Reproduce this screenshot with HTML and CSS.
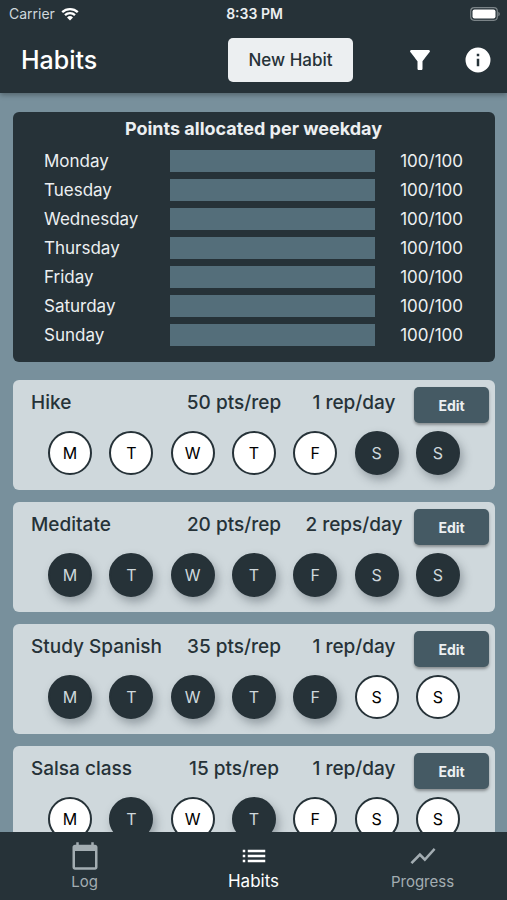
FILE: index.html
```html
<!DOCTYPE html>
<html lang="en">
<head>
<meta charset="utf-8">
<meta name="viewport" content="width=device-width, initial-scale=1">
<title>Habits</title>
<link rel="stylesheet" href="styles.css">
</head>
<body>
<header class="top">
  <div class="status">
    <span class="carrier">Carrier
      <svg class="wifi" viewBox="0 0 18 14" aria-hidden="true"><path d="M1.2 5.2a11.2 11.2 0 0 1 15.6 0M4 8.2a7.2 7.2 0 0 1 10 0" fill="none" stroke="currentColor" stroke-width="2.3"/><path d="M9 13.4 6 10.5a4.3 4.3 0 0 1 6 0z" fill="currentColor"/></svg>
    </span>
    <span class="time">8:33 PM</span>
    <svg class="battery" viewBox="0 0 30 14" aria-hidden="true"><rect x=".7" y=".7" width="26.6" height="12.6" rx="3.5" fill="none" stroke="#7b8488" stroke-width="1.2"/><rect x="2.5" y="2.5" width="23" height="9" rx="2" fill="#fff"/><path d="M28.3 4.7c2 .8 2 3.8 0 4.6z" fill="#7b8488"/></svg>
  </div>
  <div class="bar">
    <h1>Habits</h1>
    <button class="new" type="button">New Habit</button>
    <div class="actions">
      <button class="icon" type="button" aria-label="Filter"><svg viewBox="0 0 24 24"><path d="M4.25 5.61C6.27 8.2 10 13 10 13v6c0 .55.45 1 1 1h2c.55 0 1-.45 1-1v-6s3.72-4.8 5.74-7.39A.998.998 0 0 0 18.95 4H5.04a.998.998 0 0 0-.79 1.61z"/></svg></button>
      <button class="icon" type="button" aria-label="Info"><svg viewBox="0 0 24 24"><path d="M12 2a10 10 0 1 0 0 20 10 10 0 0 0 0-20zm1 15h-2v-6h2v6zm0-8h-2V7h2v2z"/></svg></button>
    </div>
  </div>
</header>
<main>
  <section class="points">
    <h2>Points allocated per weekday</h2>
    <ul>
      <li><span>Monday</span><div class="track"></div><span class="score">100/100</span></li>
      <li><span>Tuesday</span><div class="track"></div><span class="score">100/100</span></li>
      <li><span>Wednesday</span><div class="track"></div><span class="score">100/100</span></li>
      <li><span>Thursday</span><div class="track"></div><span class="score">100/100</span></li>
      <li><span>Friday</span><div class="track"></div><span class="score">100/100</span></li>
      <li><span>Saturday</span><div class="track"></div><span class="score">100/100</span></li>
      <li><span>Sunday</span><div class="track"></div><span class="score">100/100</span></li>
    </ul>
  </section>
  <article class="habit">
    <div class="info"><h3>Hike</h3><span>50 pts/rep</span><span>1 rep/day</span><button class="edit" type="button">Edit</button></div>
    <div class="days"><button type="button">M</button><button type="button">T</button><button type="button">W</button><button type="button">T</button><button type="button">F</button><button type="button" class="on">S</button><button type="button" class="on">S</button></div>
  </article>
  <article class="habit">
    <div class="info"><h3>Meditate</h3><span>20 pts/rep</span><span>2 reps/day</span><button class="edit" type="button">Edit</button></div>
    <div class="days"><button type="button" class="on">M</button><button type="button" class="on">T</button><button type="button" class="on">W</button><button type="button" class="on">T</button><button type="button" class="on">F</button><button type="button" class="on">S</button><button type="button" class="on">S</button></div>
  </article>
  <article class="habit">
    <div class="info"><h3>Study Spanish</h3><span>35 pts/rep</span><span>1 rep/day</span><button class="edit" type="button">Edit</button></div>
    <div class="days"><button type="button" class="on">M</button><button type="button" class="on">T</button><button type="button" class="on">W</button><button type="button" class="on">T</button><button type="button" class="on">F</button><button type="button">S</button><button type="button">S</button></div>
  </article>
  <article class="habit">
    <div class="info"><h3>Salsa class</h3><span>15 pts/rep</span><span>1 rep/day</span><button class="edit" type="button">Edit</button></div>
    <div class="days"><button type="button">M</button><button type="button" class="on">T</button><button type="button">W</button><button type="button" class="on">T</button><button type="button">F</button><button type="button">S</button><button type="button">S</button></div>
  </article>
</main>
<nav>
  <a href="#log"><svg viewBox="0 0 24 24"><path d="M20 3h-1V1h-2v2H7V1H5v2H4c-1.100 0-2 .9-2 2v16c0 1.100.9 2 2 2h16c1.100 0 2-.9 2-2V5c0-1.100-.9-2-2-2zm0 18H4V8h16v13z"/></svg>Log</a>
  <a href="#habits" class="current" aria-current="page"><svg viewBox="0 0 24 24"><path d="M3 13h2v-2H3v2zm0 4h2v-2H3v2zm0-8h2V7H3v2zm4 4h14v-2H7v2zm0 4h14v-2H7v2zM7 7v2h14V7H7z"/></svg>Habits</a>
  <a href="#progress"><svg viewBox="0 0 24 24"><path d="M3.500 18.490l6-6.010 4 4L22 6.920l-1.410-1.410-7.090 7.970-4-4L2 16.990z"/></svg>Progress</a>
</nav>
</body>
</html>
```
FILE: styles.css
```css
* { box-sizing: border-box; }
body {
  margin: 0;
  height: 100vh;
  display: flex;
  flex-direction: column;
  background: #78909c;
  color: #eceff1;
  font-family: Inter, "Liberation Sans", sans-serif;
}
h1, h2, h3, ul { margin: 0; padding: 0; font-weight: 500; list-style: none; }
ul { font-weight: 400; }
button { font: inherit; border: 0; padding: 0; cursor: pointer; }
svg { display: block; fill: currentColor; }

.top {
  flex: none;
  position: relative;
  background: #263238;
  box-shadow: 0 2px 5px rgba(0, 0, 0, .3);
}
.status {
  display: grid;
  grid-template-columns: 1fr auto 1fr;
  align-items: center;
  height: 27px;
  padding: 0 7px 0 9px;
  font-size: 14px;
}
.carrier { display: flex; align-items: center; gap: 6px; color: #cfd8dc; }
.wifi { width: 18px; height: 14px; color: #fff; }
.time { font-weight: 600; }
.battery { width: 30px; height: 14px; justify-self: end; }
.bar {
  display: grid;
  grid-template-columns: 1fr 125px 140px;
  align-items: center;
  height: 66px;
  padding: 0 14px 0 21px;
}
h1 { font-size: 25px; color: #fff; }
.new {
  height: 44px;
  border-radius: 5px;
  background: #eceff1;
  color: #263238;
  font-size: 17px;
  font-weight: 500;
}
.actions { display: flex; justify-content: flex-end; gap: 28px; }
.icon { width: 30px; height: 30px; background: none; color: #fff; }

main { flex: 1; min-height: 0; overflow: hidden; padding: 19px 12px 0 13px; }
.points {
  margin-bottom: 18px;
  padding: 4px 32px 13px 31px;
  border-radius: 6px;
  background: #263238;
}
h2 { font-size: 18px; font-weight: 700; line-height: 26px; text-align: center; margin-bottom: 4px; }
.points li {
  display: grid;
  grid-template-columns: 126px 1fr 88px;
  align-items: center;
  height: 29px;
  font-size: 17px;
}
.track { height: 22px; background: #546e7a; }
.score { text-align: right; }

.habit {
  height: 110px;
  margin-bottom: 12px;
  border-radius: 6px;
  background: #cfd8dc;
  color: #263238;
}
.info {
  display: grid;
  grid-template-columns: minmax(0, 1fr) 120px 120px 81px;
  align-items: center;
  height: 44px;
  padding-left: 18px;
  font-size: 19px;
  font-weight: 500;
  text-align: center;
  white-space: nowrap;
}
h3 { font-size: 19px; text-align: left; }
.edit {
  width: 75px;
  height: 36px;
  margin-top: 6px;
  border-radius: 5px;
  background: #455a64;
  color: #eceff1;
  font-size: 14px;
  font-weight: 700;
  box-shadow: 0 2px 3px rgba(0, 0, 0, .35);
}
.days { display: flex; justify-content: space-between; padding: 7px 35px 0; }
.days button {
  width: 44px;
  height: 44px;
  border: 2px solid #263238;
  border-radius: 50%;
  background: #fff;
  color: #000;
  font-size: 16px;
}
.days .on {
  background: #263238;
  color: #cfd8dc;
  box-shadow: 3px 5px 10px rgba(38, 50, 56, .35);
}

nav {
  flex: none;
  display: grid;
  grid-template-columns: repeat(3, 1fr);
  height: 68px;
  position: relative;
  background: #263238;
}
nav a {
  display: flex;
  flex-direction: column;
  align-items: center;
  padding-top: 9px;
  color: #a3adb2;
  font-size: 15px;
  line-height: 22px;
  text-decoration: none;
}
nav svg { width: 30px; height: 30px; }
nav .current { color: #fff; font-size: 17px; line-height: 20px; }
```
